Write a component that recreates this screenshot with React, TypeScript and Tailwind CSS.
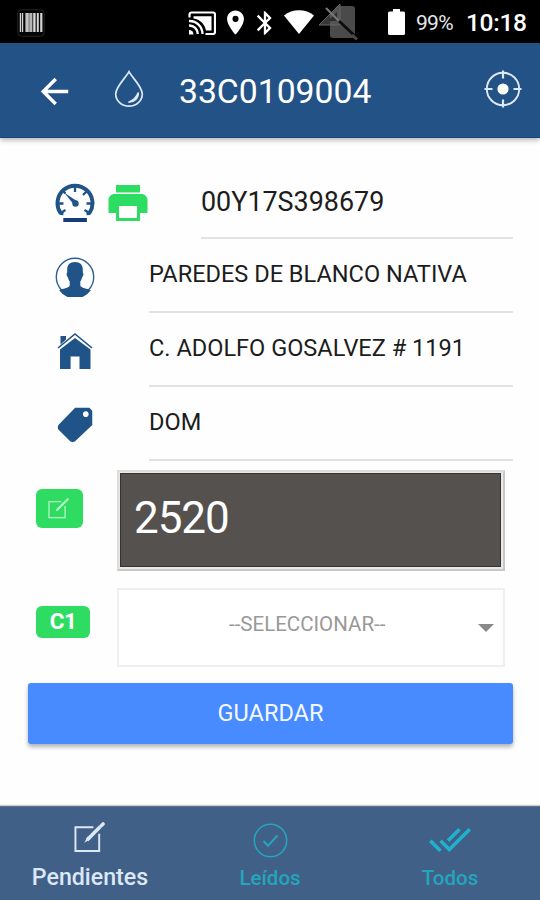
import type { ReactNode } from "react";
import { IoMdArrowBack, IoMdDoneAll, IoMdPricetag, IoMdPrint } from "react-icons/io";
import { MdBluetooth, MdLocationOn } from "react-icons/md";

function BarcodeIcon() {
  return (
    <svg className="h-7 w-7" viewBox="0 0 28 28">
      <rect x="0.7" y="0.7" width="26.6" height="26.6" rx="4" fill="#060606" stroke="#242424" />
      <g fill="#d6d6d6">
        <rect x="2.8" y="4" width="1.2" height="19" />
        <rect x="4.8" y="4" width="1.4" height="19" />
        <rect x="8.4" y="4" width="3.4" height="19" fill="#c4c4c4" />
        <rect x="12.2" y="4" width="3.2" height="19" fill="#b5b5b5" />
        <rect x="16.2" y="4" width="2.4" height="19" />
        <rect x="19.8" y="4" width="2" height="19" />
        <rect x="23.2" y="4" width="2.2" height="19" />
      </g>
    </svg>
  );
}

function CastIcon() {
  return (
    <svg className="h-6 w-7" viewBox="0 0 28 24" fill="none" stroke="#fff">
      <path d="M1.500 6.500V3.500a2 2 0 0 1 2-2H25a2 2 0 0 1 2 2v17.500a2 2 0 0 1-2 2H17.500" strokeWidth="2.200" />
      <path d="M5.500 5.200h18v14.300H18C16.500 12.500 12 8.500 5.500 7.500z" fill="#fff" stroke="none" />
      <path d="M1 10a13 13 0 0 1 13.500 13M1 14.500A8.500 8.500 0 0 1 9.800 23" strokeWidth="2.300" />
      <path d="M1 19v4.500h4.500A4.500 4.500 0 0 0 1 19z" fill="#fff" stroke="none" />
    </svg>
  );
}

function NoSignalIcon() {
  return (
    <svg className="h-[38px] w-[42px]" viewBox="0 0 42 38">
      <path d="M19 3h15a3 3 0 0 1 3 3v29H15a3 3 0 0 1-3-3V12z" fill="#4a4a4a" />
      <path d="M22 1v21H1z" fill="#5c5c5c" fillOpacity="0.6" stroke="#666" strokeWidth="1" />
      <path d="M19 9v9h-9z" fill="#2c2c2c" />
      <path d="M8 5l14 14" stroke="#777" strokeWidth="2.200" />
      <path d="M21 18l17 16" stroke="#0c0c0c" strokeWidth="2.800" />
      <path d="M34 32l5 4.500" stroke="#4a4a4a" strokeWidth="3" />
    </svg>
  );
}

function DropIcon() {
  return (
    <svg className="h-[38px] w-[30px]" viewBox="0 0 30 38" fill="none" stroke="#dfe9f5">
      <path
        d="M15 1.700C12 7.500 1.700 16.500 1.700 24a13.300 12.200 0 0 0 26.600 0C28.300 16.500 18 7.500 15 1.700z"
        strokeWidth="1.700"
      />
      <path d="M24.300 22.500c.4 5.500-3.800 9.600-9.800 9.800 4.500-1.800 8-5 9.800-9.800z" fill="#dfe9f5" strokeWidth="1.500" />
    </svg>
  );
}

function LocateIcon() {
  return (
    <svg className="h-[38px] w-[38px]" viewBox="0 0 38 38">
      <g fill="none" stroke="#dfe9f5" strokeWidth="1.900">
        <circle cx="19" cy="19" r="16.200" />
        <path d="M19 .5v8M19 29.500v8M.5 19h8M29.500 19h8" strokeWidth="2.200" />
      </g>
      <circle cx="19" cy="19" r="5.600" fill="#fff" />
    </svg>
  );
}

function GaugeIcon() {
  return (
    <svg className="h-10 w-10" viewBox="0 0 40 40" fill="none" stroke="#205387">
      <path d="M8.500 30.300L5.500 30A17.500 17.500 0 1 1 34.500 30L31.500 30.300" strokeWidth="3.900" strokeLinejoin="round" />
      <path
        d="M20 3v6M3 20.500h5.500M37 20.500h-5.500M31.500 8.500l-3.500 3.500M8.500 8.500l2 2M5.500 30l5-3M34.500 30l-5-3"
        strokeWidth="2.300"
      />
      <circle cx="20.500" cy="20.500" r="3.200" fill="#205387" stroke="none" />
      <path d="M9.300 9.800L22.500 18.500l-3.300 3.500z" fill="#205387" stroke="none" />
      <rect x="8.300" y="35" width="23.600" height="4" fill="#163c78" stroke="none" />
    </svg>
  );
}

function PersonIcon() {
  return (
    <svg className="h-10 w-10" viewBox="0 0 40 40">
      <circle cx="20" cy="20" r="18.700" fill="#fff" stroke="#2f5f90" strokeWidth="1.400" />
      <path
        d="M20 5c5.500 0 8 3.200 7.800 8v2.500c1 .4.700 3.800-.6 4.500-.5 2.500-1.200 3.400-1.900 4.600v4.200c1.200 2.200 6.700 2.800 10.500 4.400A19.400 19.400 0 0 1 4.200 33.200c3.800-1.600 9.300-2.200 10.500-4.400v-4.200c-.7-1.200-1.400-2.100-1.900-4.600-1.300-.7-1.600-4.100-.6-4.500V13c-.2-4.800 2.300-8 7.800-8z"
        fill="#205387"
      />
    </svg>
  );
}

function HouseIcon() {
  return (
    <svg className="h-10 w-10" viewBox="0 0 40 40" fill="#205387">
      <path d="M5.500 5h5.500v3.500l-5.500 5z" />
      <path d="M20 7L5 18.500V38h10.600V25.500h8.900V38H35.500V18.500z" />
      <path d="M3 17L20 3l17 14" fill="none" stroke="#205387" strokeWidth="1.600" />
    </svg>
  );
}

function ComposeIcon({ className, thick }: { className: string; thick: number }) {
  return (
    <svg className={className} viewBox="0 0 32 32" fill="none" stroke="currentColor">
      <path d="M20 5.500H1.500v24.500H26V12" strokeWidth="2" />
      <path d="M13.500 18.500L27 5" strokeWidth={thick} />
      <path d="M28 4l2-2" strokeWidth={thick} strokeLinecap="round" />
      <path d="M12.500 19.500l2-3.600 1.600 1.600z" fill="currentColor" strokeWidth="1.500" />
    </svg>
  );
}

function CheckCircleIcon() {
  return (
    <svg className="mb-[5px] h-[35px] w-[35px]" viewBox="0 0 35 35" fill="none" stroke="currentColor">
      <circle cx="17.500" cy="17.500" r="16.200" strokeWidth="1.600" />
      <path d="M10.500 18l4.500 4.700L24.500 12.500" strokeWidth="2" />
    </svg>
  );
}

function StatusBar() {
  return (
    <div className="flex h-[43px] items-center bg-black text-white">
      <div className="ml-[17px] mt-0.5">
        <BarcodeIcon />
      </div>
      <div className="ml-auto flex h-full items-center pr-[14px]">
        <div className="mt-0.5">
          <CastIcon />
        </div>
        <MdLocationOn className="ml-[5px] mt-0.5 h-[29px] w-[29px]" />
        <MdBluetooth className="ml-px mt-0.5 h-7 w-7" />
        <svg className="ml-[5px] h-6 w-[30px]" viewBox="0 0 30 24" fill="currentColor">
          <path d="M15 24L0 5.500C8-1.500 22-1.500 30 5.500z" />
        </svg>
        <div className="ml-[4px]">
          <NoSignalIcon />
        </div>
        <svg className="ml-[28px] h-[26px] w-[17px]" viewBox="0 0 17 26" fill="currentColor">
          <path d="M5 0h7v2.500h3.500A1.500 1.500 0 0 1 17 4v20.500a1.500 1.500 0 0 1-1.500 1.500h-14A1.500 1.500 0 0 1 0 24.500V4a1.500 1.500 0 0 1 1.500-1.500H5z" />
        </svg>
        <span className="ml-[11px] mt-[3px] w-[50px] text-[21px] leading-none tracking-[-0.7px] text-gray-200">99%</span>
        <span className="mt-[3px] w-[60px] text-[24.500px] font-medium leading-none tracking-[-0.3px]">10:18</span>
      </div>
    </div>
  );
}

function Field({ icon, value }: { icon: ReactNode; value: string }) {
  return (
    <div className="flex h-[74px]">
      <div className="mt-[18px] ml-[55px] flex h-10 w-10 items-center justify-center">{icon}</div>
      <div className="ml-[54px] mr-[27px] flex-1 border-b-2 border-[#e2e2e2] pt-[21px] text-[23.550px] leading-7 text-[#1c1c1c]">
        {value}
      </div>
    </div>
  );
}

function Tab({ icon, label, className }: { icon: ReactNode; label: string; className: string }) {
  return (
    <button className={`flex h-full w-[180px] flex-col items-center ${className}`}>
      <span className="flex h-[56px] items-end">{icon}</span>
      {label}
    </button>
  );
}

export default function App() {
  return (
    <div className="flex h-[900px] w-[540px] flex-col overflow-hidden bg-[#fefefe] font-[Roboto,sans-serif]">
      <StatusBar />
      <header className="z-10 flex h-[95px] items-center border-b border-[#17457b] bg-[#225286] text-white shadow-[0_2px_5px_rgba(0,0,0,0.3)]">
        <IoMdArrowBack className="ml-[34px] mt-0.5 h-[41px] w-[41px]" />
        <div className="ml-[39px] -mt-0.5">
          <DropIcon />
        </div>
        <h1 className="ml-[35px] mt-1 text-[33.700px] leading-none">33C0109004</h1>
        <div className="ml-auto mr-[18px] -mt-0.5">
          <LocateIcon />
        </div>
      </header>

      <main className="flex flex-1 flex-col">
        <div className="flex h-[101px]">
          <div className="ml-[55px] mt-[45px]">
            <GaugeIcon />
          </div>
          <IoMdPrint className="ml-[9px] mt-[41px] h-12 w-12 text-[#2ddd62]" />
          <div className="ml-[49px] mr-[27px] flex-1 border-b-2 border-[#e2e2e2] pt-12 text-[26.900px] leading-8 text-[#1c1c1c]">
            00Y17S398679
          </div>
        </div>
        <Field icon={<PersonIcon />} value="PAREDES DE BLANCO NATIVA" />
        <Field icon={<HouseIcon />} value="C. ADOLFO GOSALVEZ # 1191" />
        <Field icon={<IoMdPricetag className="h-[46px] w-[46px] shrink-0 text-[#205387]" />} value="DOM" />

        <div className="mt-[9px] flex">
          <button className="ml-9 mt-[19px] flex h-[39px] w-[47px] items-center justify-center rounded-[6px] bg-[#2edc62] text-[#b5f5c6]">
            <ComposeIcon className="mr-0.5 h-[21px] w-[21px]" thick={3.4} />
          </button>
          <div className="ml-[34px] h-[101px] w-[388px] border-2 border-t-[#dcdcdc] border-r-[#c8c8c8] border-b-[#c8c8c8] border-l-[#dcdcdc] bg-[#e9e9e9] pt-px pl-px pr-[2px] pb-[2px]">
            <div className="h-full border border-[#353231] bg-[#55514f] pl-[13px] pt-[17px] text-[44px] leading-[54px] tracking-[-1.100px] text-white">
              2520
            </div>
          </div>
        </div>

        <div className="mt-[17px] flex">
          <span className="ml-9 mt-[18px] flex h-8 w-[54px] items-center justify-center rounded-[6px] bg-[#2edc62] text-[22.500px] font-bold tracking-[-0.500px] text-white">
            C1
          </span>
          <div className="ml-[27px] flex h-[79px] w-[388px] border-2 border-[#eeefef] bg-white">
            <span className="ml-[110px] mt-[20px] text-[20.500px] leading-7 text-[#999]">--SELECCIONAR--</span>
            <svg className="ml-auto mr-[9px] mt-[34px] h-2 w-4" viewBox="0 0 16 8" fill="#8a8a8a">
              <path d="M0 0h16L8 8z" />
            </svg>
          </div>
        </div>

        <button className="ml-7 mr-[27px] mt-4 h-[61px] rounded-[3px] bg-[#488aff] text-[23.500px] text-[#f3f8ff] shadow-[0_3px_4px_rgba(0,0,0,0.3)]">
          GUARDAR
        </button>
      </main>

      <nav className="flex h-[94px] border-t border-[#5b738e] bg-[#406088] text-[#25a5bb] shadow-[0_-1px_1px_rgba(0,0,0,0.2)]">
        <Tab
          icon={<ComposeIcon className="mb-[10px] mr-0.5 h-[31px] w-[31px]" thick={3.6} />}
          label="Pendientes"
          className="text-[23.200px] font-medium leading-7 text-[#dde8f7]"
        />
        <Tab icon={<CheckCircleIcon />} label="Leídos" className="text-[20.500px] font-medium leading-[30px]" />
        <Tab
          icon={<IoMdDoneAll className="mb-0.5 h-[42px] w-[42px] text-[#20b2cc]" />}
          label="Todos"
          className="text-[20.500px] font-medium leading-[30px]"
        />
      </nav>
    </div>
  );
}
